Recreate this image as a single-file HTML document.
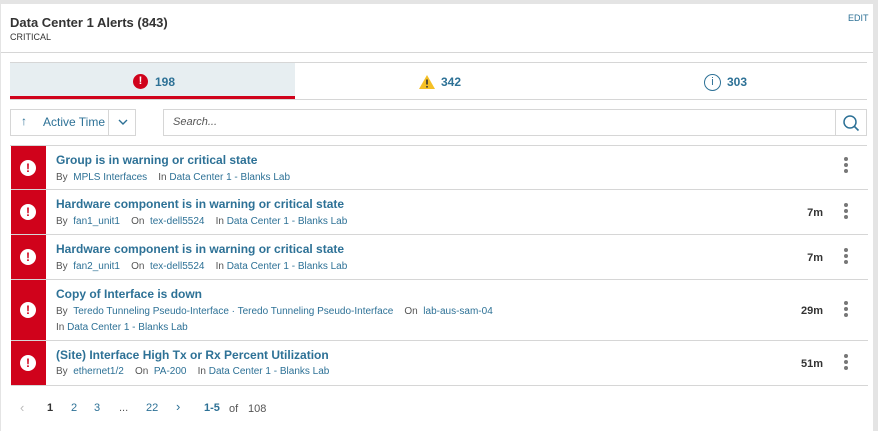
<!DOCTYPE html>
<html><head><style>
*{box-sizing:border-box;margin:0;padding:0}
body{width:878px;height:431px;background:#e4e4e4;font-family:"Liberation Sans",sans-serif;position:relative;overflow:hidden}
.card{position:absolute;left:1px;top:4px;width:872px;height:427px;background:#fff}
.a{position:absolute}
.t{color:#2d7196}
.g{color:#555}
.row{position:absolute;left:10px;width:857px;border-bottom:1px solid #d6d6d6}
.red{position:absolute;left:0;top:0;bottom:0;width:35px;background:#d0021b}
.red i{position:absolute;left:9px;top:50%;margin-top:-8px;width:16px;height:16px;border-radius:50%;background:#fff;color:#d0021b;font-style:normal;font-weight:bold;font-size:12px;text-align:center;line-height:16px}
.ti{position:absolute;left:45px;font-size:12px;font-weight:bold;color:#2d7196}
.me{position:absolute;left:45px;font-size:10px;color:#555;white-space:nowrap}
.me b{font-weight:normal;color:#2d7196}
.tm{position:absolute;right:45px;font-size:11px;font-weight:bold;color:#333}
.dots{position:absolute;right:20px;width:4px}
.dots span{display:block;width:4px;height:4px;border-radius:50%;background:#777;margin-bottom:2px}
</style></head><body>
<div class="card">
<div class="a" style="left:9px;top:11px;font-size:13px;font-weight:bold;color:#333">Data Center 1 Alerts (843)</div>
<div class="a" style="left:9px;top:28px;font-size:9px;color:#333">CRITICAL</div>
<div class="a t" style="left:847px;top:9px;font-size:9px">EDIT</div>
<div class="a" style="left:0;top:48px;width:872px;height:1px;background:#d6d6d6"></div>
<div class="a" style="left:9px;top:58px;width:857px;height:38px;border-top:1px solid #d6d6d6;border-bottom:1px solid #d6d6d6"></div>
<div class="a" style="left:9px;top:59px;width:285px;height:36px;background:#e7eef1;border-bottom:3px solid #d0021b"></div>
<div class="a" style="left:132px;top:70px;width:15px;height:15px;border-radius:50%;background:#d0021b;color:#fff;font-weight:bold;font-size:11px;text-align:center;line-height:15px">!</div>
<div class="a t" style="left:154px;top:71px;font-size:12px;font-weight:bold">198</div>
<svg class="a" style="left:417px;top:70px" width="18" height="16"><path d="M9 1L17 15H1Z" fill="#f5c026"/><rect x="8.2" y="5.5" width="1.6" height="5" fill="#333"/><rect x="8.2" y="12" width="1.6" height="1.6" fill="#333"/></svg>
<div class="a t" style="left:440px;top:71px;font-size:12px;font-weight:bold">342</div>
<div class="a t" style="left:703px;top:70px;width:17px;height:17px;border:1.3px solid #2d7196;border-radius:50%;text-align:center;font-size:11px;line-height:15px">i</div>
<div class="a t" style="left:726px;top:71px;font-size:12px;font-weight:bold">303</div>
<div class="a" style="left:9px;top:105px;width:126px;height:27px;border:1px solid #d6d6d6"></div>
<div class="a" style="left:107px;top:105px;width:1px;height:27px;background:#d6d6d6"></div>
<div class="a t" style="left:20px;top:110px;font-size:12px">↑</div>
<div class="a t" style="left:42px;top:111px;font-size:12px">Active Time</div>
<svg class="a" style="left:116px;top:114px" width="12" height="8"><path d="M2 2L6 6L10 2" stroke="#2d7196" stroke-width="1.4" fill="none"/></svg>
<div class="a" style="left:162px;top:105px;width:704px;height:27px;border:1px solid #d6d6d6"></div>
<div class="a" style="left:834px;top:105px;width:1px;height:27px;background:#d6d6d6"></div>
<div class="a" style="left:172px;top:112px;font-size:11px;font-style:italic;color:#555">Search...</div>
<svg class="a" style="left:841px;top:110px" width="18" height="18"><circle cx="8" cy="8" r="6" stroke="#2d7196" stroke-width="1.5" fill="none"/><path d="M12.5 12.5L16.5 16.5" stroke="#2d7196" stroke-width="1.6"/></svg>
<div class="a" style="left:9px;top:141px;width:857px;height:1px;background:#d6d6d6"></div>

<div class="row" style="top:142px;height:44px"><div class="red"><i>!</i></div>
<div class="ti" style="top:7px">Group is in warning or critical state</div>
<div class="me" style="top:26px">By &nbsp;<b>MPLS Interfaces</b> &nbsp;&nbsp; In <b>Data Center 1 - Blanks Lab</b></div>
<div class="dots" style="top:11px"><span></span><span></span><span></span></div></div>

<div class="row" style="top:186px;height:45px"><div class="red"><i>!</i></div>
<div class="ti" style="top:7px">Hardware component is in warning or critical state</div>
<div class="me" style="top:26px">By &nbsp;<b>fan1_unit1</b> &nbsp;&nbsp; On &nbsp;<b>tex-dell5524</b> &nbsp;&nbsp; In <b>Data Center 1 - Blanks Lab</b></div>
<div class="tm" style="top:17px">7m</div>
<div class="dots" style="top:13px"><span></span><span></span><span></span></div></div>

<div class="row" style="top:231px;height:45px"><div class="red"><i>!</i></div>
<div class="ti" style="top:7px">Hardware component is in warning or critical state</div>
<div class="me" style="top:26px">By &nbsp;<b>fan2_unit1</b> &nbsp;&nbsp; On &nbsp;<b>tex-dell5524</b> &nbsp;&nbsp; In <b>Data Center 1 - Blanks Lab</b></div>
<div class="tm" style="top:17px">7m</div>
<div class="dots" style="top:13px"><span></span><span></span><span></span></div></div>

<div class="row" style="top:276px;height:61px"><div class="red"><i>!</i></div>
<div class="ti" style="top:7px">Copy of Interface is down</div>
<div class="me" style="top:26px">By &nbsp;<b>Teredo Tunneling Pseudo-Interface · Teredo Tunneling Pseudo-Interface</b> &nbsp;&nbsp; On &nbsp;<b>lab-aus-sam-04</b></div>
<div class="me" style="top:42px">In <b>Data Center 1 - Blanks Lab</b></div>
<div class="tm" style="top:25px">29m</div>
<div class="dots" style="top:21px"><span></span><span></span><span></span></div></div>

<div class="row" style="top:337px;height:45px"><div class="red"><i>!</i></div>
<div class="ti" style="top:7px">(Site) Interface High Tx or Rx Percent Utilization</div>
<div class="me" style="top:25px">By &nbsp;<b>ethernet1/2</b> &nbsp;&nbsp; On &nbsp;<b>PA-200</b> &nbsp;&nbsp; In <b>Data Center 1 - Blanks Lab</b></div>
<div class="tm" style="top:17px">51m</div>
<div class="dots" style="top:13px"><span></span><span></span><span></span></div></div>

<div class="a" style="left:19px;top:396px;font-size:13px;color:#bbb">‹</div>
<div class="a" style="left:46px;top:398px;font-size:11px;font-weight:bold;color:#333">1</div>
<div class="a t" style="left:70px;top:398px;font-size:11px">2</div>
<div class="a t" style="left:93px;top:398px;font-size:11px">3</div>
<div class="a g" style="left:118px;top:398px;font-size:11px">...</div>
<div class="a t" style="left:145px;top:398px;font-size:11px">22</div>
<div class="a t" style="left:175px;top:395px;font-size:13px">›</div>
<div class="a t" style="left:203px;top:398px;font-size:11px;font-weight:bold">1-5</div>
<div class="a g" style="left:228px;top:399px;font-size:11px">of</div>
<div class="a" style="left:247px;top:399px;font-size:11px;color:#555">108</div>
</div>
</body></html>
